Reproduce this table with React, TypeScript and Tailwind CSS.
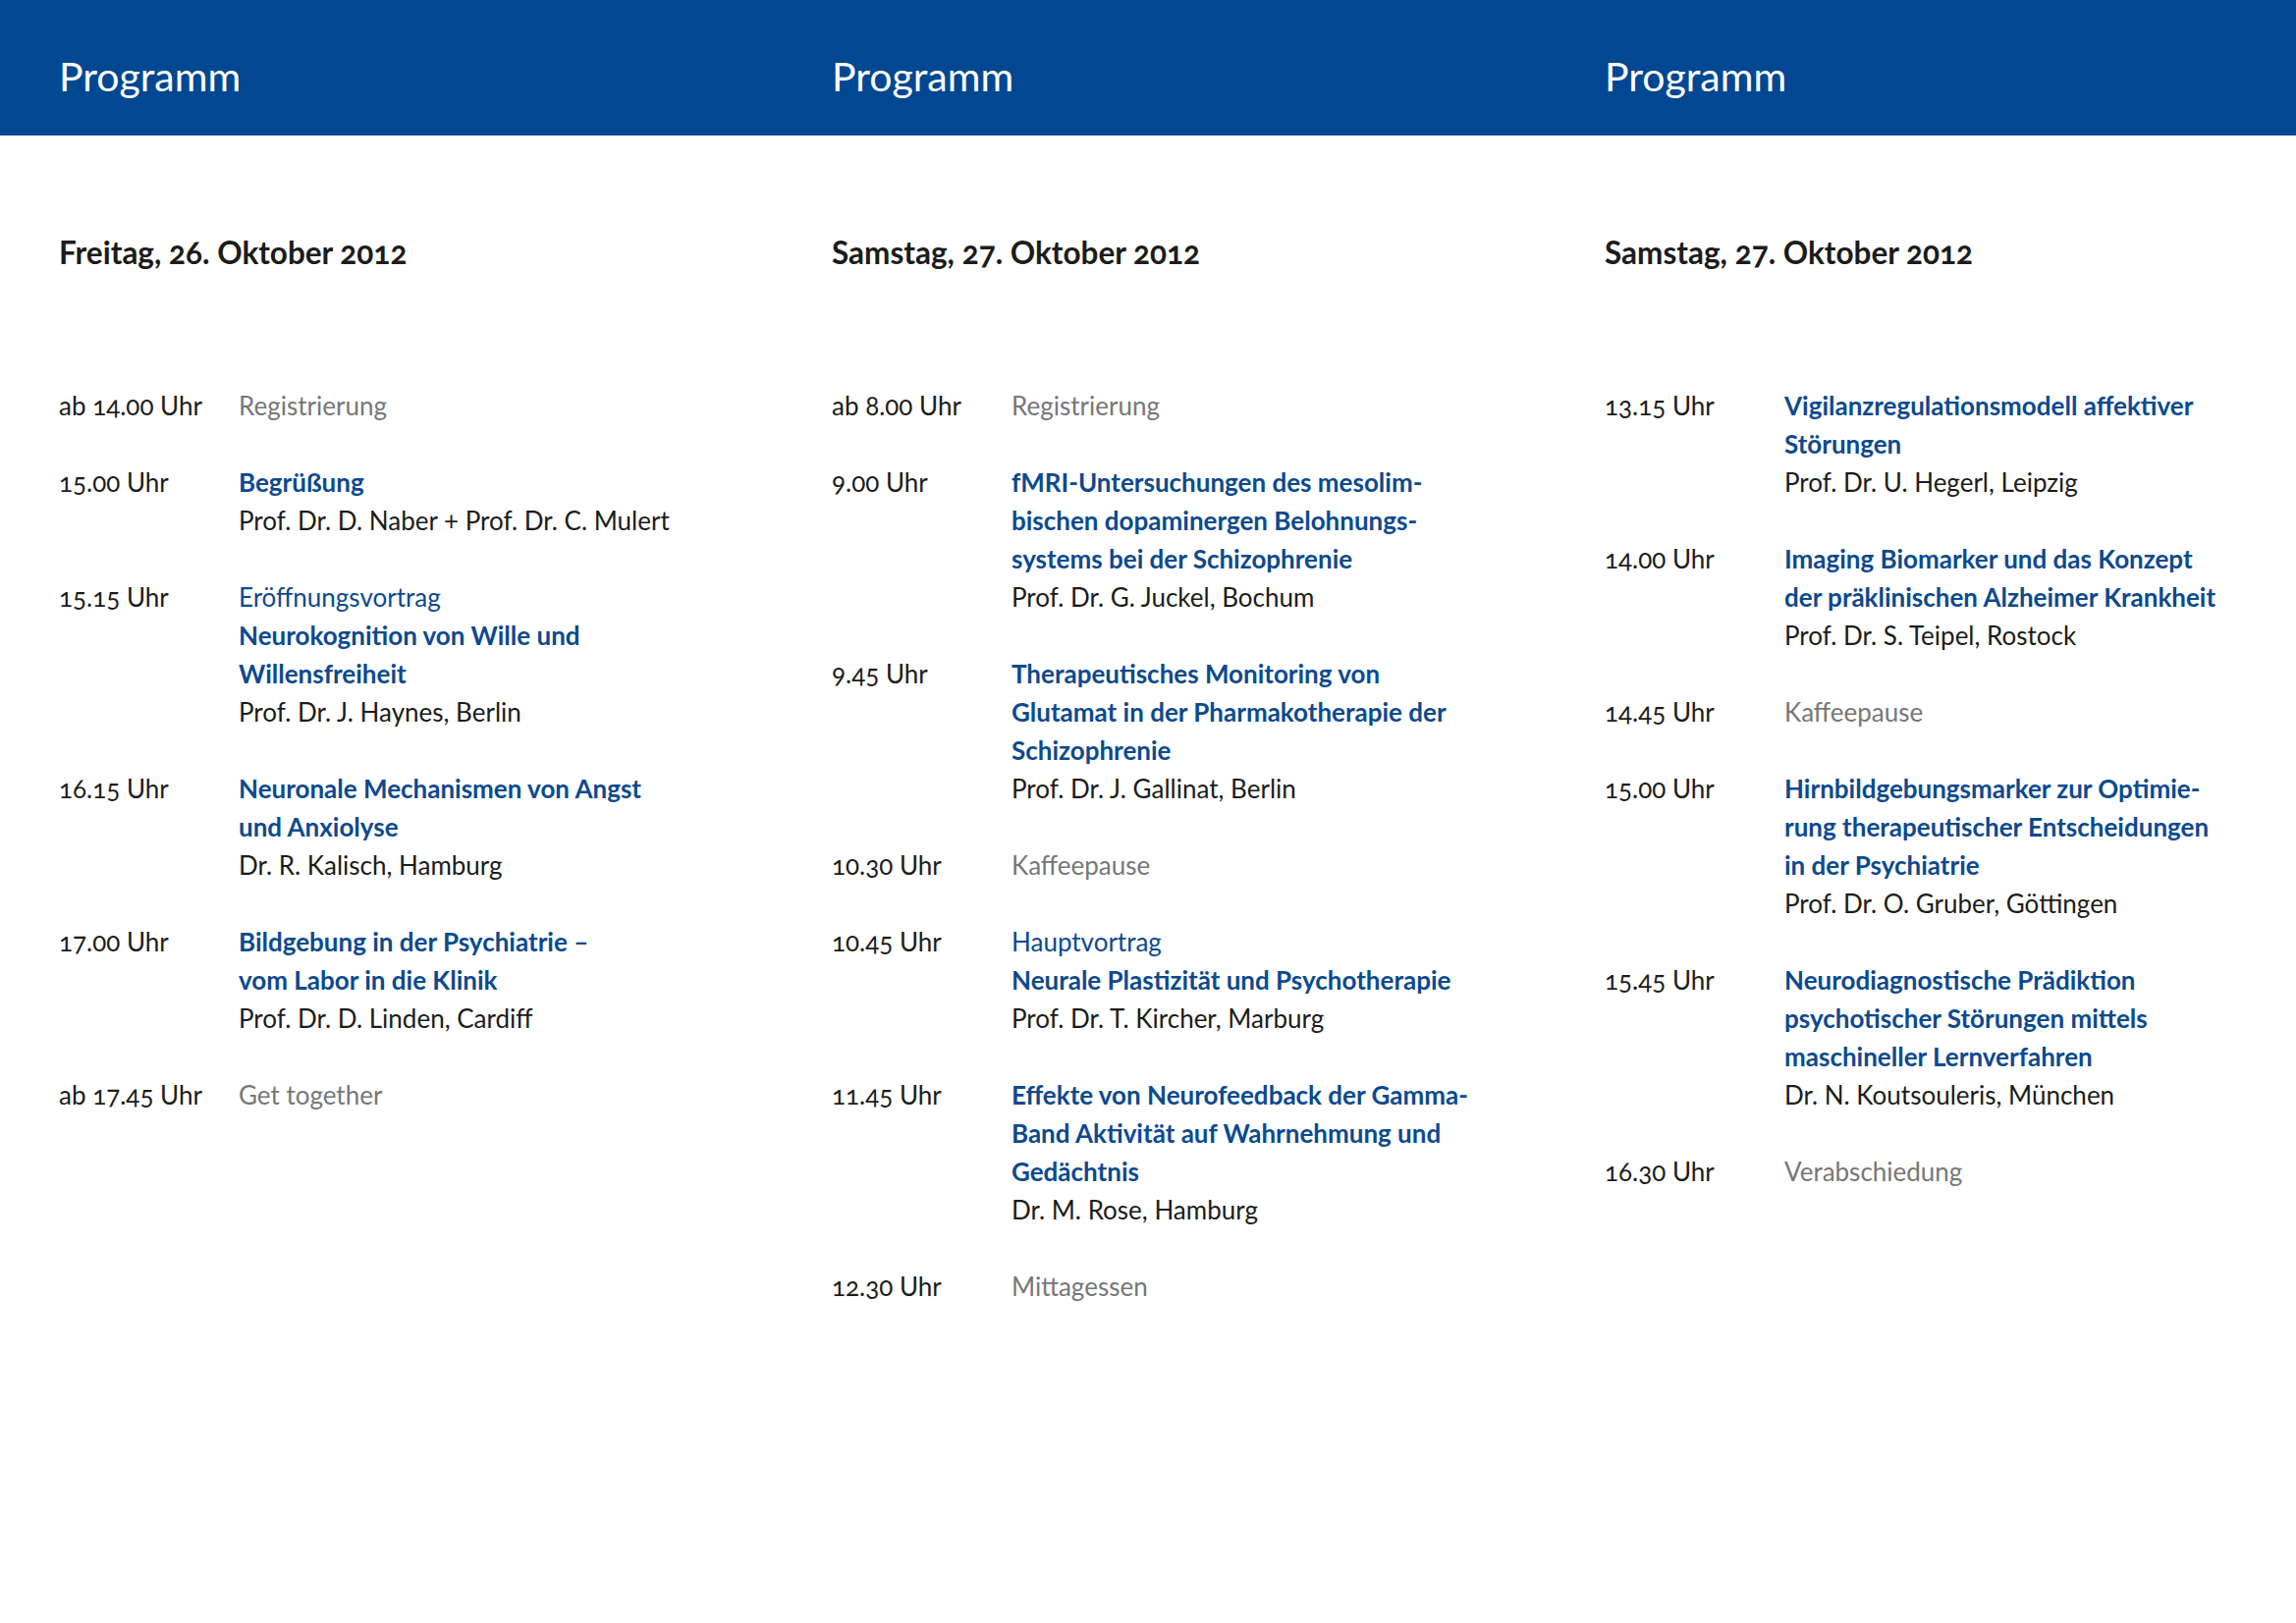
import React from "react";

type Line = { t: string; k: "bold" | "reg" | "gray" | "name" };
type Entry = { time: string; lines: Line[] };
type Col = { date: string; entries: Entry[] };

const b = (t: string): Line => ({ t, k: "bold" });
const r = (t: string): Line => ({ t, k: "reg" });
const g = (t: string): Line => ({ t, k: "gray" });
const n = (t: string): Line => ({ t, k: "name" });

const cols: Col[] = [
  {
    date: "Freitag, 26. Oktober 2012",
    entries: [
      { time: "ab 14.00 Uhr", lines: [g("Registrierung")] },
      { time: "15.00 Uhr", lines: [b("Begrüßung"), n("Prof. Dr. D. Naber + Prof. Dr. C. Mulert")] },
      {
        time: "15.15 Uhr",
        lines: [r("Eröffnungsvortrag"), b("Neurokognition von Wille und"), b("Willensfreiheit"), n("Prof. Dr. J. Haynes, Berlin")],
      },
      {
        time: "16.15 Uhr",
        lines: [b("Neuronale Mechanismen von Angst"), b("und Anxiolyse"), n("Dr. R. Kalisch, Hamburg")],
      },
      {
        time: "17.00 Uhr",
        lines: [b("Bildgebung in der Psychiatrie –"), b("vom Labor in die Klinik"), n("Prof. Dr. D. Linden, Cardiff")],
      },
      { time: "ab 17.45 Uhr", lines: [g("Get together")] },
    ],
  },
  {
    date: "Samstag, 27. Oktober 2012",
    entries: [
      { time: "ab 8.00 Uhr", lines: [g("Registrierung")] },
      {
        time: "9.00 Uhr",
        lines: [
          b("fMRI-Untersuchungen des mesolim-"),
          b("bischen dopaminergen Belohnungs-"),
          b("systems bei der Schizophrenie"),
          n("Prof. Dr. G. Juckel, Bochum"),
        ],
      },
      {
        time: "9.45 Uhr",
        lines: [
          b("Therapeutisches Monitoring von"),
          b("Glutamat in der Pharmakotherapie der"),
          b("Schizophrenie"),
          n("Prof. Dr. J. Gallinat, Berlin"),
        ],
      },
      { time: "10.30 Uhr", lines: [g("Kaffeepause")] },
      {
        time: "10.45 Uhr",
        lines: [r("Hauptvortrag"), b("Neurale Plastizität und Psychotherapie"), n("Prof. Dr. T. Kircher, Marburg")],
      },
      {
        time: "11.45 Uhr",
        lines: [
          b("Effekte von Neurofeedback der Gamma-"),
          b("Band Aktivität auf Wahrnehmung und"),
          b("Gedächtnis"),
          n("Dr. M. Rose, Hamburg"),
        ],
      },
      { time: "12.30 Uhr", lines: [g("Mittagessen")] },
    ],
  },
  {
    date: "Samstag, 27. Oktober 2012",
    entries: [
      {
        time: "13.15 Uhr",
        lines: [b("Vigilanzregulationsmodell affektiver"), b("Störungen"), n("Prof. Dr. U. Hegerl, Leipzig")],
      },
      {
        time: "14.00 Uhr",
        lines: [
          b("Imaging Biomarker und das Konzept"),
          b("der präklinischen Alzheimer Krankheit"),
          n("Prof. Dr. S. Teipel, Rostock"),
        ],
      },
      { time: "14.45 Uhr", lines: [g("Kaffeepause")] },
      {
        time: "15.00 Uhr",
        lines: [
          b("Hirnbildgebungsmarker zur Optimie-"),
          b("rung therapeutischer Entscheidungen"),
          b("in der Psychiatrie"),
          n("Prof. Dr. O. Gruber, Göttingen"),
        ],
      },
      {
        time: "15.45 Uhr",
        lines: [
          b("Neurodiagnostische Prädiktion"),
          b("psychotischer Störungen mittels"),
          b("maschineller Lernverfahren"),
          n("Dr. N. Koutsouleris, München"),
        ],
      },
      { time: "16.30 Uhr", lines: [g("Verabschiedung")] },
    ],
  },
];

function lineClass(k: Line["k"]): string {
  if (k === "bold") return "font-bold text-[#0c4a8e]";
  if (k === "reg") return "font-normal text-[#0c4a8e]";
  if (k === "gray") return "font-normal text-[#777777]";
  return "font-normal text-[#1c1c1a]";
}

export default function App() {
  return (
    <div className="w-[2338px] h-[1653px] bg-white overflow-hidden font-['Lato',_'Open_Sans',_sans-serif]">
      <div className="h-[138px] bg-[#014791] flex pl-[60px]">
        {cols.map((_, i) => (
          <div key={i} className="w-[787px] shrink-0 pt-[57px] text-[41px] leading-[41px] text-white">
            Programm
          </div>
        ))}
      </div>
      <div className="flex pl-[60px]">
        {cols.map((c, i) => (
          <div key={i} className="w-[787px] shrink-0 pt-[99px]">
            <h2 className="text-[31.5px] leading-[40px] font-bold text-[#1c1c1a] oldstyle-nums">{c.date}</h2>
            <div className="mt-[117px] flex flex-col gap-[39px] text-[26px] leading-[39px]">
              {c.entries.map((e, j) => (
                <div key={j} className="flex">
                  <div className="w-[183px] shrink-0 text-[#1c1c1a] oldstyle-nums whitespace-nowrap">{e.time}</div>
                  <div className="flex flex-col whitespace-nowrap">
                    {e.lines.map((l, m) => (
                      <div key={m} className={lineClass(l.k)}>
                        {l.t}
                      </div>
                    ))}
                  </div>
                </div>
              ))}
            </div>
          </div>
        ))}
      </div>
    </div>
  );
}
